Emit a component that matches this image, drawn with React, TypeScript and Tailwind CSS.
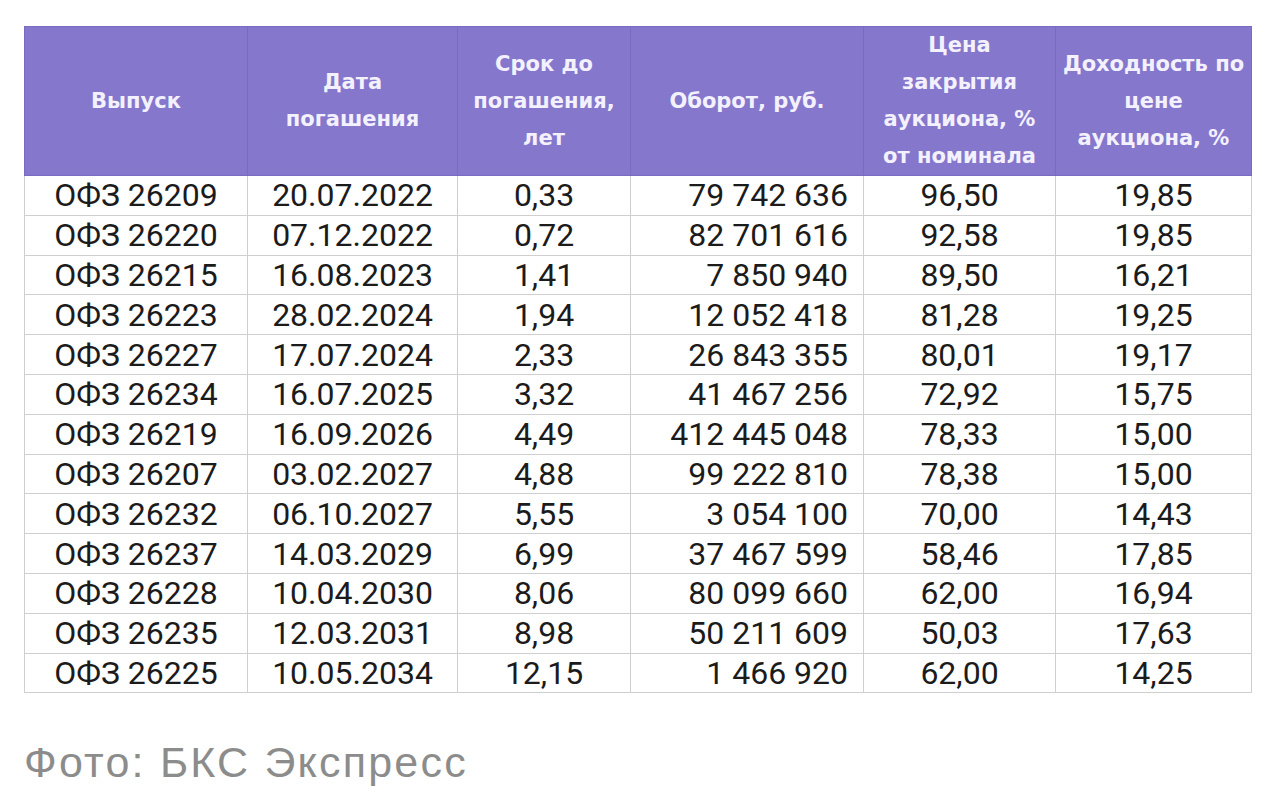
import React from "react";

const rows: string[][] = [
  ["ОФЗ 26209", "20.07.2022", "0,33", "79 742 636", "96,50", "19,85"],
  ["ОФЗ 26220", "07.12.2022", "0,72", "82 701 616", "92,58", "19,85"],
  ["ОФЗ 26215", "16.08.2023", "1,41", "7 850 940", "89,50", "16,21"],
  ["ОФЗ 26223", "28.02.2024", "1,94", "12 052 418", "81,28", "19,25"],
  ["ОФЗ 26227", "17.07.2024", "2,33", "26 843 355", "80,01", "19,17"],
  ["ОФЗ 26234", "16.07.2025", "3,32", "41 467 256", "72,92", "15,75"],
  ["ОФЗ 26219", "16.09.2026", "4,49", "412 445 048", "78,33", "15,00"],
  ["ОФЗ 26207", "03.02.2027", "4,88", "99 222 810", "78,38", "15,00"],
  ["ОФЗ 26232", "06.10.2027", "5,55", "3 054 100", "70,00", "14,43"],
  ["ОФЗ 26237", "14.03.2029", "6,99", "37 467 599", "58,46", "17,85"],
  ["ОФЗ 26228", "10.04.2030", "8,06", "80 099 660", "62,00", "16,94"],
  ["ОФЗ 26235", "12.03.2031", "8,98", "50 211 609", "50,03", "17,63"],
  ["ОФЗ 26225", "10.05.2034", "12,15", "1 466 920", "62,00", "14,25"],
];

const headers: string[][] = [
  ["Выпуск"],
  ["Дата", "погашения"],
  ["Срок до", "погашения,", "лет"],
  ["Оборот, руб."],
  ["Цена", "закрытия", "аукциона, %", "от номинала"],
  ["Доходность по", "цене", "аукциона, %"],
];

const widths = ["w-[223px]", "w-[210px]", "w-[173px]", "w-[233px]", "w-[192px]", "w-[196px]"];

export default function App() {
  return (
    <div className="min-h-[801px] bg-white pl-[24px] pt-[26px]">
      <table className="table-fixed border-collapse w-[1227px]">
        <colgroup>
          {widths.map((w, i) => (
            <col key={i} className={w} />
          ))}
        </colgroup>
        <thead>
          <tr className="h-[148px] bg-[#8577cc]">
            {headers.map((lines, i) => (
              <th
                key={i}
                className="border border-[#7a6bc2] p-0 text-center align-middle font-['DejaVu_Sans',sans-serif] text-[21px] font-bold leading-[37px] text-[#f4f1ff] whitespace-nowrap"
              >
                {lines.map((l, j) => (
                  <div key={j}>{l}</div>
                ))}
              </th>
            ))}
          </tr>
        </thead>
        <tbody>
          {rows.map((r, i) => (
            <tr key={i} className="h-[39.8px]">
              {r.map((c, j) => (
                <td
                  key={j}
                  className={`border border-[#cfcfcf] p-0 align-middle font-['Roboto',sans-serif] text-[32px] leading-[36px] text-[#1b1b1b] whitespace-nowrap ${
                    j === 3 ? "text-right pr-[15px]" : "text-center"
                  }`}
                >
                  {c}
                </td>
              ))}
            </tr>
          ))}
        </tbody>
      </table>
      <p className="mt-[44px] font-['Liberation_Sans',Arial,sans-serif] text-[43px] leading-[50px] tracking-[2.2px] text-[#8c8c8c]">
        Фото: БКС Экспресс
      </p>
    </div>
  );
}
